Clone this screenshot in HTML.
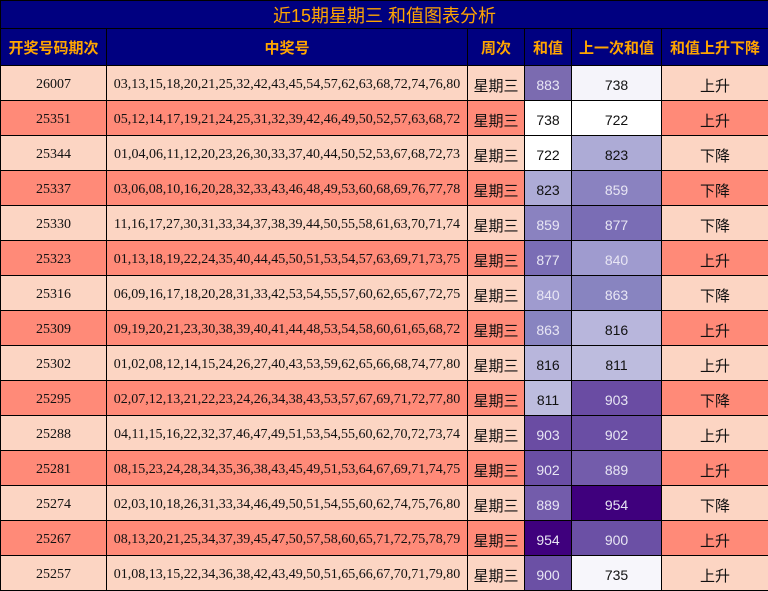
<!DOCTYPE html>
<html><head><meta charset="utf-8"><style>
body{margin:0;background:#fff;width:768px;height:591px;overflow:hidden}
table{border-collapse:collapse;table-layout:fixed;width:768px;font-family:"Liberation Serif","Noto Serif CJK SC",serif;font-size:14px;color:#111}
td{border:1px solid #000;text-align:center;padding:3px 0 0 0;height:31px;white-space:nowrap;overflow:hidden}
.t td{background:#000080;color:#FFA500;font-family:"Liberation Sans","Noto Sans CJK SC",sans-serif;font-size:18px;height:27px;padding:0}
.h td{background:#000080;color:#FFA500;font-family:"Liberation Sans","Noto Sans CJK SC",sans-serif;font-weight:bold;font-size:15px;height:36px;padding:0}
tr.a td{background:#FCD5C3}
tr.b td{background:#FF8A78}
td.w{font-family:"Liberation Sans","Noto Sans CJK SC",sans-serif;font-size:14px}
td.l{color:#e8e6f4}
td.c{font-family:"Liberation Sans","Noto Sans CJK SC",sans-serif;font-size:15px;padding-top:5px;height:29px}
</style></head><body>
<table>
<colgroup><col style="width:106px"><col style="width:361px"><col style="width:57px"><col style="width:47px"><col style="width:90px"><col style="width:107px"></colgroup>
<tr class="t"><td colspan="6">近15期星期三 和值图表分析</td></tr>
<tr class="h"><td>开奖号码期次</td><td>中奖号</td><td>周次</td><td>和值</td><td>上一次和值</td><td>和值上升下降</td></tr>
<tr class="a"><td>26007</td><td>03,13,15,18,20,21,25,32,42,43,45,54,57,62,63,68,72,74,76,80</td><td class="c">星期三</td><td class="w l" style="background:#7B6BB0">883</td><td class="w" style="background:#F5F4FA">738</td><td class="c">上升</td></tr>
<tr class="b"><td>25351</td><td>05,12,14,17,19,21,24,25,31,32,39,42,46,49,50,52,57,63,68,72</td><td class="c">星期三</td><td class="w" style="background:#fff">738</td><td class="w" style="background:#fff">722</td><td class="c">上升</td></tr>
<tr class="a"><td>25344</td><td>01,04,06,11,12,20,23,26,30,33,37,40,44,50,52,53,67,68,72,73</td><td class="c">星期三</td><td class="w" style="background:#fff">722</td><td class="w" style="background:#ADABD6">823</td><td class="c">下降</td></tr>
<tr class="b"><td>25337</td><td>03,06,08,10,16,20,28,32,33,43,46,48,49,53,60,68,69,76,77,78</td><td class="c">星期三</td><td class="w" style="background:#ADABD6">823</td><td class="w l" style="background:#8A82C0">859</td><td class="c">下降</td></tr>
<tr class="a"><td>25330</td><td>11,16,17,27,30,31,33,34,37,38,39,44,50,55,58,61,63,70,71,74</td><td class="c">星期三</td><td class="w l" style="background:#8A82C0">859</td><td class="w l" style="background:#7A6DB5">877</td><td class="c">下降</td></tr>
<tr class="b"><td>25323</td><td>01,13,18,19,22,24,35,40,44,45,50,51,53,54,57,63,69,71,73,75</td><td class="c">星期三</td><td class="w l" style="background:#7A6DB5">877</td><td class="w l" style="background:#9F9BCF">840</td><td class="c">上升</td></tr>
<tr class="a"><td>25316</td><td>06,09,16,17,18,20,28,31,33,42,53,54,55,57,60,62,65,67,72,75</td><td class="c">星期三</td><td class="w l" style="background:#9F9BCF">840</td><td class="w l" style="background:#8884C0">863</td><td class="c">下降</td></tr>
<tr class="b"><td>25309</td><td>09,19,20,21,23,30,38,39,40,41,44,48,53,54,58,60,61,65,68,72</td><td class="c">星期三</td><td class="w l" style="background:#8884C0">863</td><td class="w" style="background:#B8B6DC">816</td><td class="c">上升</td></tr>
<tr class="a"><td>25302</td><td>01,02,08,12,14,15,24,26,27,40,43,53,59,62,65,66,68,74,77,80</td><td class="c">星期三</td><td class="w" style="background:#B8B6DC">816</td><td class="w" style="background:#BDBCDE">811</td><td class="c">上升</td></tr>
<tr class="b"><td>25295</td><td>02,07,12,13,21,22,23,24,26,34,38,43,53,57,67,69,71,72,77,80</td><td class="c">星期三</td><td class="w" style="background:#BDBCDE">811</td><td class="w l" style="background:#6A4CA3">903</td><td class="c">下降</td></tr>
<tr class="a"><td>25288</td><td>04,11,15,16,22,32,37,46,47,49,51,53,54,55,60,62,70,72,73,74</td><td class="c">星期三</td><td class="w l" style="background:#6A4CA3">903</td><td class="w l" style="background:#6A4EA4">902</td><td class="c">上升</td></tr>
<tr class="b"><td>25281</td><td>08,15,23,24,28,34,35,36,38,43,45,49,51,53,64,67,69,71,74,75</td><td class="c">星期三</td><td class="w l" style="background:#6A4EA4">902</td><td class="w l" style="background:#735CAB">889</td><td class="c">上升</td></tr>
<tr class="a"><td>25274</td><td>02,03,10,18,26,31,33,34,46,49,50,51,54,55,60,62,74,75,76,80</td><td class="c">星期三</td><td class="w l" style="background:#735CAB">889</td><td class="w l" style="background:#3F007D">954</td><td class="c">下降</td></tr>
<tr class="b"><td>25267</td><td>08,13,20,21,25,34,37,39,45,47,50,57,58,60,65,71,72,75,78,79</td><td class="c">星期三</td><td class="w l" style="background:#3F007D">954</td><td class="w l" style="background:#6B50A5">900</td><td class="c">上升</td></tr>
<tr class="a"><td>25257</td><td>01,08,13,15,22,34,36,38,42,43,49,50,51,65,66,67,70,71,79,80</td><td class="c">星期三</td><td class="w l" style="background:#6B50A5">900</td><td class="w" style="background:#F7F6FB">735</td><td class="c">上升</td></tr>
</table>
</body></html>
